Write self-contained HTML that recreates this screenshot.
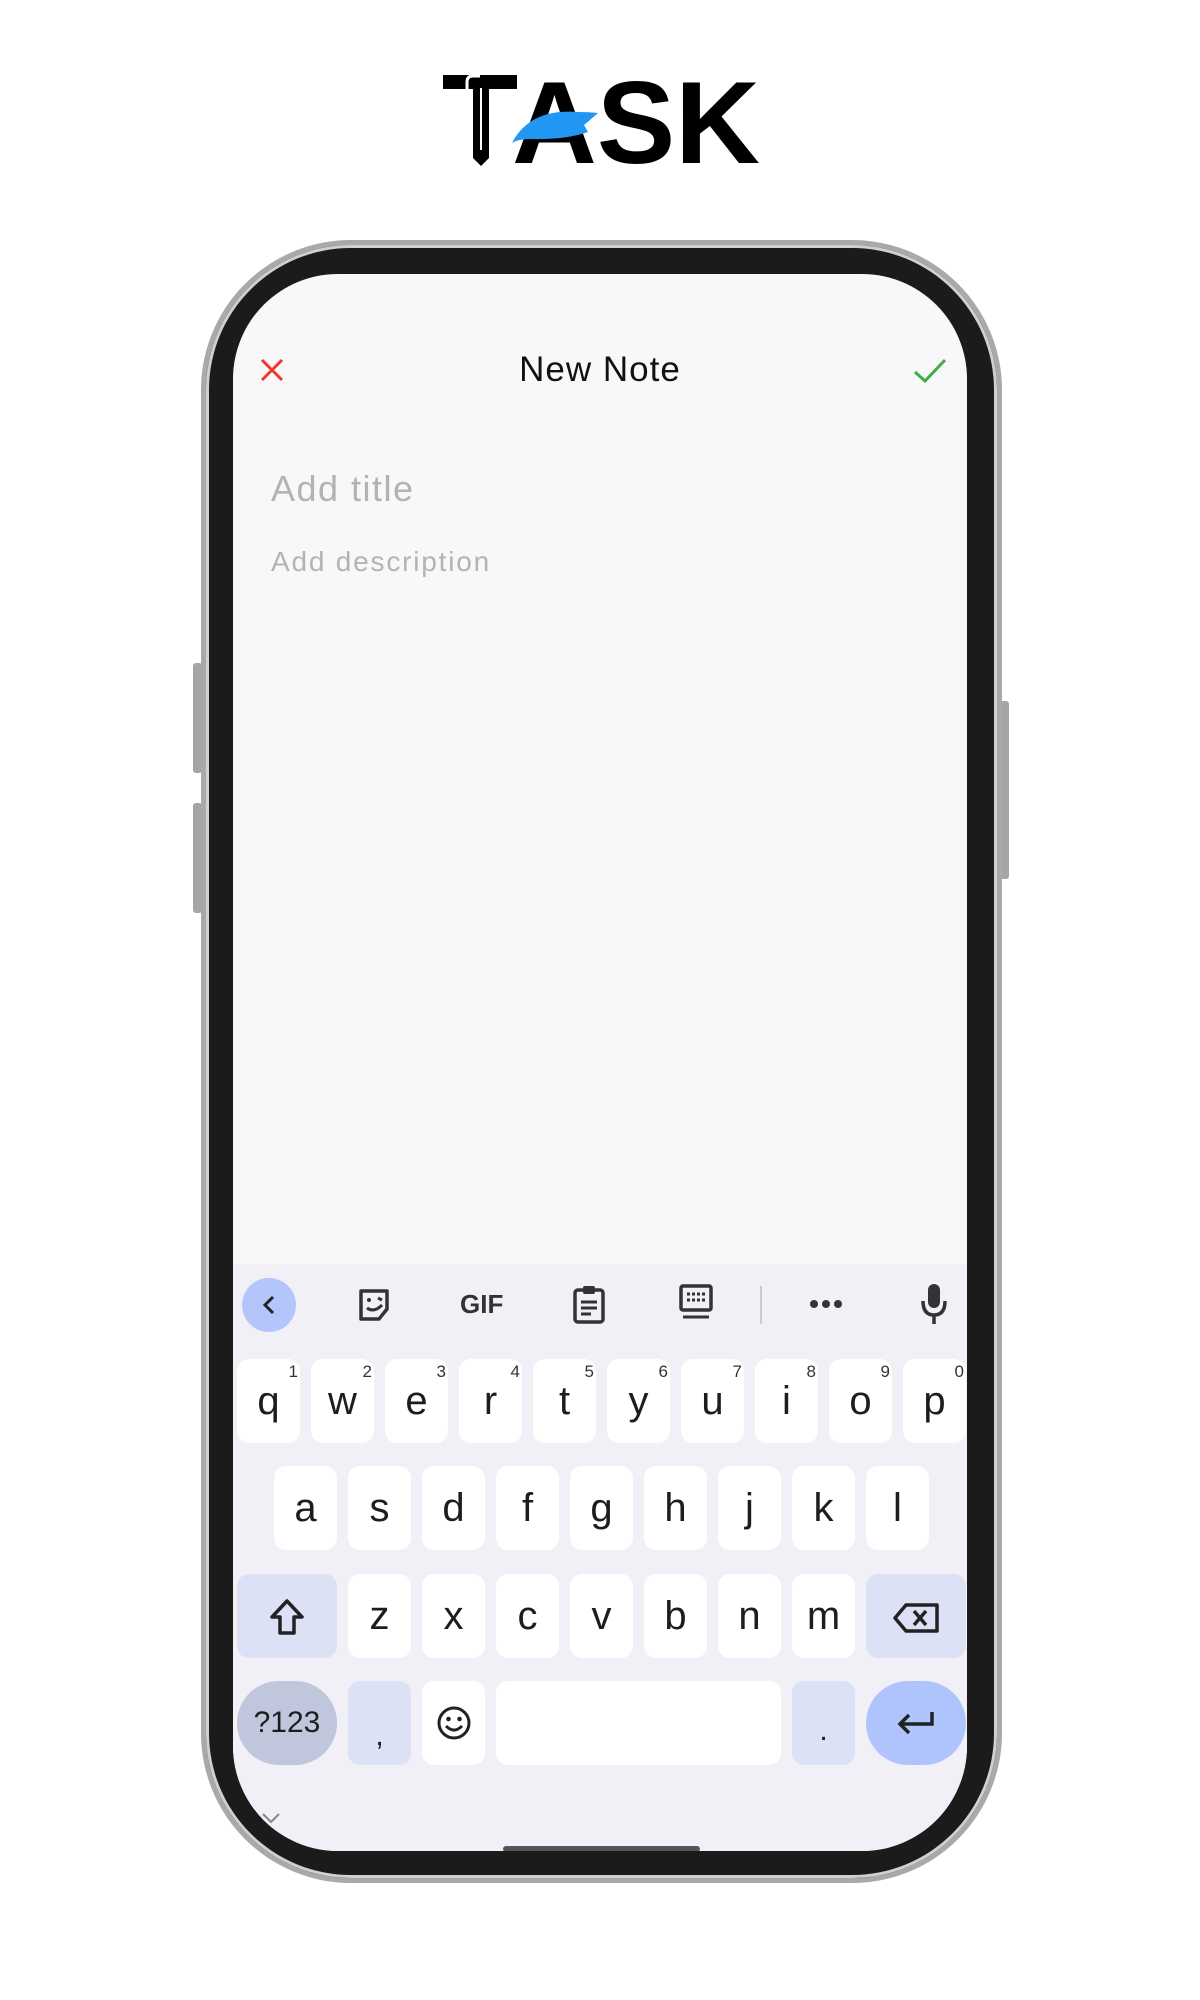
<!DOCTYPE html>
<html><head><meta charset="utf-8"><style>
*{margin:0;padding:0;box-sizing:border-box}
body{width:1200px;height:2000px;background:#fff;position:relative;overflow:hidden;font-family:"Liberation Sans",sans-serif}
.abs{position:absolute}
.phone{left:201px;top:240px;width:801px;height:1643px;border-radius:150px;background:#1b1b1b;border:5px solid #a9a9ab;box-shadow:inset 0 0 0 3px #d0d0d0}
.screen{left:233px;top:274px;width:734px;height:1577px;border-radius:105px;background:#f8f8fa;overflow:hidden}
.btn{background:#a5a5a8;border-radius:3px}
.kb{left:0;top:990px;width:734px;height:587px;background:#f0f0f6}
.key{position:absolute;width:63px;height:84px;background:#fff;border-radius:12px;font-size:40px;color:#1d1d1f;text-align:center;line-height:84px}
.key sup{position:absolute;right:2px;top:4px;font-size:17px;line-height:17px;color:#333}
.mod{background:#dde1f6}
</style></head><body>
<svg class="abs" style="left:0;top:0" width="1200" height="200">
<rect x="443" y="75" width="74" height="14" fill="#000"/>
<path d="M473 75 H489 V158 L481 166 L473 158 Z" fill="#000"/>
<path d="M467 88 V82 Q467 76 473 76 H480" stroke="#fff" stroke-width="3" fill="none"/>
<line x1="467" y1="86" x2="467" y2="119" stroke="#fff" stroke-width="3"/>
<line x1="481" y1="88" x2="481" y2="150" stroke="#fff" stroke-width="2"/>
<text x="512" y="163" font-family="Liberation Sans" font-weight="bold" font-size="117" textLength="248" lengthAdjust="spacingAndGlyphs">ASK</text>
<path d="M512 143 Q530 108 578 112 Q590 112 598 113 Q590 120 584 125 L588 132 Q565 140 530 139 Q518 139 512 143 Z" fill="#2196f3"/>
</svg>
<div class="abs btn" style="left:193px;top:663px;width:9px;height:110px"></div>
<div class="abs btn" style="left:193px;top:803px;width:9px;height:110px"></div>
<div class="abs btn" style="left:1000px;top:701px;width:9px;height:178px"></div>
<div class="abs phone"></div>
<div class="abs screen">
  <svg class="abs" style="left:26px;top:83px" width="26" height="26"><path d="M3 3L23 23M23 3L3 23" stroke="#f0392b" stroke-width="3"/></svg>
  <div class="abs" style="left:0;width:734px;top:76px;text-align:center;font-size:35px;color:#111;letter-spacing:1px">New Note</div>
  <svg class="abs" style="left:680px;top:84px" width="34" height="26"><path d="M2 14L12 23L32 2" stroke="#3fae49" stroke-width="3" fill="none"/></svg>
  <div class="abs" style="left:38px;top:194px;font-size:36px;color:#b3b3b5;letter-spacing:1.5px">Add title</div>
  <div class="abs" style="left:38px;top:272px;font-size:28px;color:#b3b3b5;letter-spacing:1.8px">Add description</div>
  <div class="abs kb">
    <div class="abs" style="left:9px;top:14px;width:54px;height:54px;border-radius:27px;background:#b4c5fb"></div>
    <svg class="abs" style="left:26px;top:30px" width="20" height="22"><path d="M14 3L6 11L14 19" stroke="#222" stroke-width="3" fill="none"/></svg>
    <svg class="abs" style="left:124px;top:23px" width="36" height="36"><path d="M4 4H30V22L22 32H4Z" stroke="#333" stroke-width="3.5" fill="none" stroke-linejoin="round"/><circle cx="12" cy="13" r="2" fill="#333"/><path d="M21 11l4 2M10 21Q17 26 25 18" stroke="#333" stroke-width="3" fill="none"/></svg>
    <div class="abs" style="left:227px;top:25px;font-size:26px;font-weight:bold;color:#333">GIF</div>
    <svg class="abs" style="left:339px;top:20px" width="34" height="40"><rect x="3" y="6" width="28" height="32" rx="3" stroke="#333" stroke-width="3.5" fill="none"/><rect x="11" y="2" width="12" height="8" rx="2" fill="#333"/><path d="M9 18h16M9 24h16M9 30h10" stroke="#333" stroke-width="3"/></svg>
    <svg class="abs" style="left:446px;top:20px" width="34" height="36"><rect x="2" y="2" width="30" height="24" rx="2" stroke="#333" stroke-width="3.5" fill="none"/><path d="M8 10h18M8 16h18" stroke="#333" stroke-width="3" stroke-dasharray="3 2"/><path d="M4 33h26" stroke="#333" stroke-width="3"/></svg>
    <div class="abs" style="left:527px;top:22px;width:2px;height:38px;background:#ccc"></div>
    <svg class="abs" style="left:575px;top:34px" width="36" height="12"><circle cx="6" cy="6" r="4" fill="#333"/><circle cx="18" cy="6" r="4" fill="#333"/><circle cx="30" cy="6" r="4" fill="#333"/></svg>
    <svg class="abs" style="left:687px;top:18px" width="28" height="44"><rect x="8" y="2" width="12" height="24" rx="6" fill="#333"/><path d="M3 19Q3 33 14 33Q25 33 25 19M14 33V42" stroke="#333" stroke-width="3.5" fill="none"/></svg>
    <!-- row1 -->
    <div class="key" style="left:4px;top:95px">q<sup>1</sup></div>
    <div class="key" style="left:78px;top:95px">w<sup>2</sup></div>
    <div class="key" style="left:152px;top:95px">e<sup>3</sup></div>
    <div class="key" style="left:226px;top:95px">r<sup>4</sup></div>
    <div class="key" style="left:300px;top:95px">t<sup>5</sup></div>
    <div class="key" style="left:374px;top:95px">y<sup>6</sup></div>
    <div class="key" style="left:448px;top:95px">u<sup>7</sup></div>
    <div class="key" style="left:522px;top:95px">i<sup>8</sup></div>
    <div class="key" style="left:596px;top:95px">o<sup>9</sup></div>
    <div class="key" style="left:670px;top:95px">p<sup>0</sup></div>
    <!-- row2 -->
    <div class="key" style="left:41px;top:202px">a</div>
    <div class="key" style="left:115px;top:202px">s</div>
    <div class="key" style="left:189px;top:202px">d</div>
    <div class="key" style="left:263px;top:202px">f</div>
    <div class="key" style="left:337px;top:202px">g</div>
    <div class="key" style="left:411px;top:202px">h</div>
    <div class="key" style="left:485px;top:202px">j</div>
    <div class="key" style="left:559px;top:202px">k</div>
    <div class="key" style="left:633px;top:202px">l</div>
    <!-- row3 -->
    <div class="key mod" style="left:4px;top:310px;width:100px"><svg style="margin-top:24px" width="36" height="38"><path d="M18 3L33 19H25V35H11V19H3Z" stroke="#222" stroke-width="3.5" fill="none" stroke-linejoin="round"/></svg></div>
    <div class="key" style="left:115px;top:310px">z</div>
    <div class="key" style="left:189px;top:310px">x</div>
    <div class="key" style="left:263px;top:310px">c</div>
    <div class="key" style="left:337px;top:310px">v</div>
    <div class="key" style="left:411px;top:310px">b</div>
    <div class="key" style="left:485px;top:310px">n</div>
    <div class="key" style="left:559px;top:310px">m</div>
    <div class="key mod" style="left:633px;top:310px;width:100px"><svg style="margin-top:28px" width="48" height="32"><path d="M14 3H45V29H14L3 16Z" stroke="#222" stroke-width="3.5" fill="none" stroke-linejoin="round"/><path d="M22 9L34 23M34 9L22 23" stroke="#222" stroke-width="3.5"/></svg></div>
    <!-- row4 -->
    <div class="key" style="left:4px;top:417px;width:100px;border-radius:42px;background:#c0c6dc;font-size:30px">?123</div>
    <div class="key mod" style="left:115px;top:417px;font-size:30px;line-height:110px">,</div>
    <div class="key" style="left:189px;top:417px"><svg style="margin-top:24px" width="36" height="36"><circle cx="18" cy="18" r="15" stroke="#222" stroke-width="3" fill="none"/><circle cx="12.5" cy="14" r="2.3" fill="#222"/><circle cx="23.5" cy="14" r="2.3" fill="#222"/><path d="M10 21Q18 29 26 21" stroke="#222" stroke-width="3" fill="none"/></svg></div>
    <div class="key" style="left:263px;top:417px;width:285px"></div>
    <div class="key mod" style="left:559px;top:417px;font-size:30px;line-height:100px">.</div>
    <div class="key" style="left:633px;top:417px;width:100px;border-radius:42px;background:#afc4fd"><svg style="margin-top:28px" width="40" height="28"><path d="M36 3V15H5M13 6L4 15L13 24" stroke="#222" stroke-width="3.5" fill="none"/></svg></div>
    <svg class="abs" style="left:28px;top:548px" width="20" height="12"><path d="M2 2L10 10L18 2" stroke="#888" stroke-width="2" fill="none"/></svg>
    <div class="abs" style="left:270px;top:582px;width:197px;height:6px;border-radius:3px;background:#555"></div>
  </div>
</div>
</body></html>
